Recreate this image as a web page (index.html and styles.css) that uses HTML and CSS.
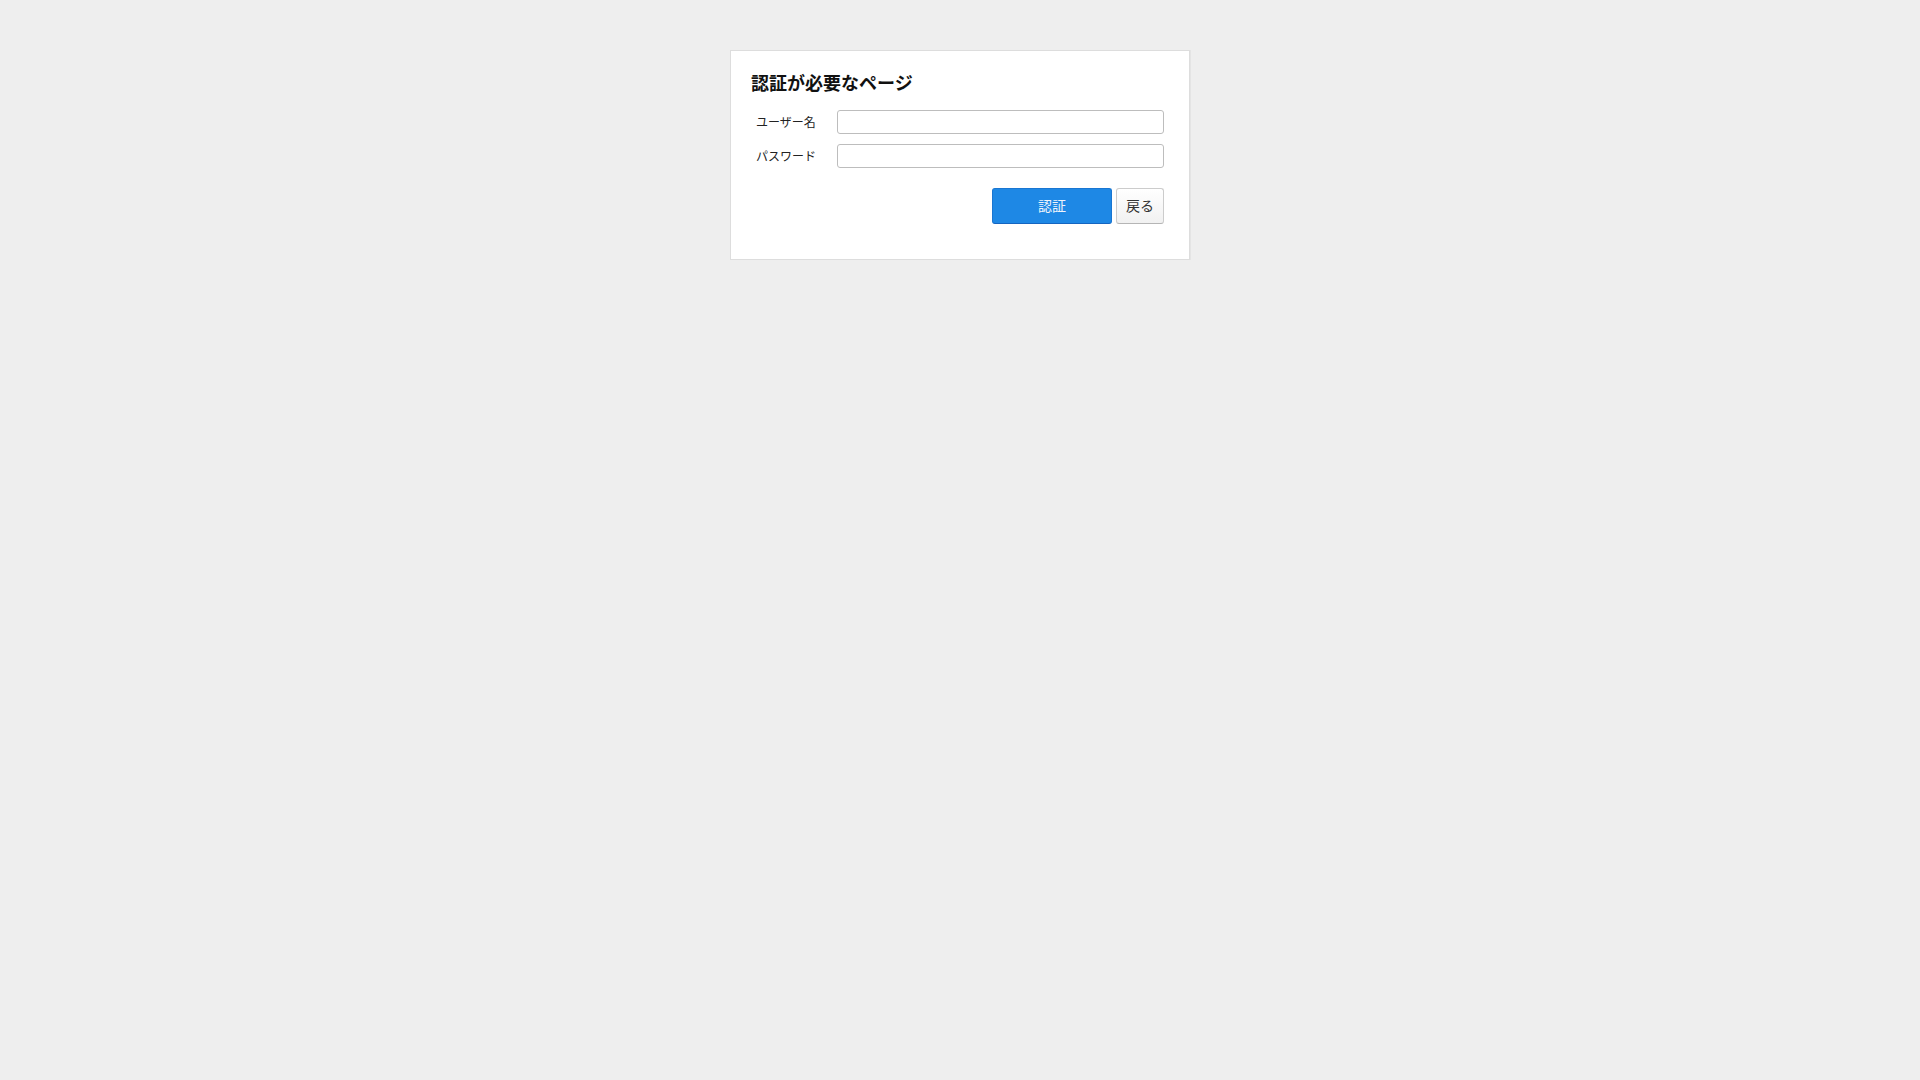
FILE: index.html
```html
<!DOCTYPE html>
<html lang="ja">
<head>
<meta charset="utf-8">
<title>認証が必要なページ</title>
<link rel="stylesheet" href="styles.css">
</head>
<body>
<div class="card">
  <h1 class="title">認証が必要なページ</h1>
  <form class="form">
    <div class="row">
      <label class="label" for="user">ユーザー名</label>
      <input class="input" id="user" type="text">
    </div>
    <div class="row">
      <label class="label" for="pass">パスワード</label>
      <input class="input" id="pass" type="password">
    </div>
    <div class="actions">
      <button type="button" class="btn btn-primary">認証</button>
      <button type="button" class="btn btn-default">戻る</button>
    </div>
  </form>
</div>
</body>
</html>
```

FILE: styles.css
```css
html, body {
  margin: 0;
  padding: 0;
}
body {
  background: #eeeeee;
  font-family: "Noto Sans CJK JP", "Noto Sans", sans-serif;
  color: #222;
}
.card {
  box-sizing: border-box;
  width: 460px;
  margin: 50px auto 0;
  background: #fff;
  border: 1px solid #dddddd;
  box-shadow: 0 1px 0 #dddddd, 1px 0 0 #e4e4e4;
  padding: 18px 25px 35px 20px;
}
.title {
  margin: 0;
  font-size: 18px;
  line-height: 26px;
  font-weight: bold;
  color: #111;
}
.form {
  margin: 15px 0 0;
}
.row {
  display: grid;
  grid-template-columns: 86px 1fr;
  align-items: center;
  margin-bottom: 10px;
}
.label {
  padding-left: 5px;
  padding-bottom: 2px;
  font-size: 12px;
  color: #222;
}
.input {
  box-sizing: border-box;
  width: 100%;
  height: 24px;
  margin: 0;
  border: 1px solid #bdbdbd;
  border-radius: 3px;
  background: #fff;
  padding: 2px 5px;
  font-size: 13px;
}
.actions {
  display: flex;
  justify-content: flex-end;
  gap: 4px;
  margin-top: 20px;
}
.btn {
  box-sizing: border-box;
  height: 36px;
  margin: 0;
  padding: 0 0 2px;
  border-radius: 3px;
  font-family: "Noto Sans CJK JP", "Noto Sans", sans-serif;
  font-size: 14px;
  cursor: pointer;
}
.btn-primary {
  width: 120px;
  background: #1e88e5;
  border: 1px solid #1976d2;
  border-bottom-color: #1565c0;
  color: #eef4fb;
}
.btn-default {
  width: 48px;
  background: linear-gradient(#ffffff, #f1f1f1);
  border: 1px solid #cccccc;
  border-bottom-color: #b5b5b5;
  color: #333;
}
```
